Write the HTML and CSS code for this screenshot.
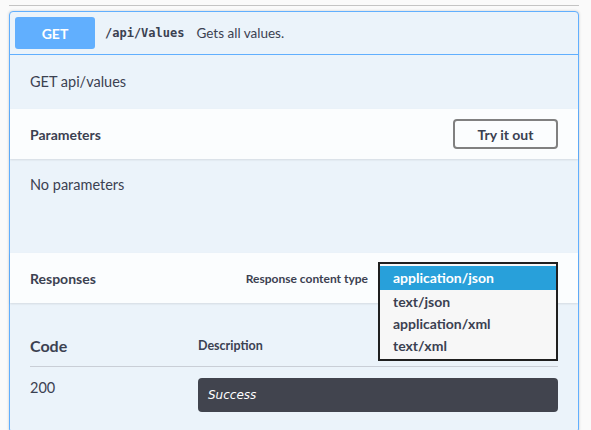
FILE: index.html
```html
<!DOCTYPE html>
<html>
<head>
<meta charset="utf-8">
<link rel="stylesheet" href="styles.css">
</head>
<body>
<div class="page">
  <div class="rule"></div>
  <div class="opblock">
    <div class="summary">
      <span class="method">GET</span>
      <span class="path">/api/Values</span>
      <span class="summary-desc">Gets all values.</span>
    </div>
    <div class="description">GET api/values</div>
    <div class="section-header">
      <h4 class="section-title">Parameters</h4>
      <button class="try-out">Try it out</button>
    </div>
    <div class="params-body">No parameters</div>
    <div class="section-header">
      <h4 class="section-title">Responses</h4>
      <div class="content-type">
        <span class="ct-label">Response content type</span>
        <div class="select">
          <ul class="listbox">
            <li class="option selected">application/json</li>
            <li class="option">text/json</li>
            <li class="option">application/xml</li>
            <li class="option">text/xml</li>
          </ul>
        </div>
      </div>
    </div>
    <div class="responses-body">
      <div class="resp-head">
        <div class="col-code head-code">Code</div>
        <div class="head-desc">Description</div>
      </div>
      <div class="resp-row">
        <div class="col-code row-code">200</div>
        <div class="resp-desc"><em>Success</em></div>
      </div>
    </div>
  </div>
</div>
</body>
</html>
```
FILE: styles.css
```css
* { box-sizing: border-box; }
html, body { margin: 0; padding: 0; }
body {
  background: #fafafa;
  font-family: Lato, "Open Sans", sans-serif;
  color: #3b4151;
  overflow: hidden;
}
.page { padding: 5px 0 0 9px; width: 579px; }
.rule { height: 1px; background: #c4c4c4; width: 570px; }
.opblock {
  margin-top: 5px;
  width: 570px;
  border: 1px solid #61affe;
  border-radius: 4px;
  background: #ebf3fa;
  box-shadow: 0 0 3px rgba(0,0,0,.19);
}
.summary {
  display: flex;
  align-items: center;
  padding: 5px;
  border-bottom: 1px solid #61affe;
}
.method {
  width: 80px;
  height: 32px;
  background: #61affe;
  color: #fff;
  border-radius: 3px;
  font-weight: 700;
  font-size: 14px;
  display: flex;
  align-items: center;
  justify-content: center;
}
.path {
  margin-left: 10px;
  font-family: "DejaVu Sans Mono", monospace;
  font-size: 12px;
  font-weight: 600;
  color: #3b4151;
}
.summary-desc {
  margin-left: 12px;
  font-size: 13.5px;
}
.description {
  padding: 18px 20px 0;
  height: 54px;
  font-size: 14.5px;
  line-height: 18px;
}
.section-header {
  height: 50px;
  display: flex;
  align-items: center;
  justify-content: space-between;
  padding: 0 20px;
  background: rgba(255,255,255,.8);
  box-shadow: 0 1px 2px rgba(0,0,0,.1);
  position: relative;
  z-index: 1;
}
.section-title {
  margin: 0;
  font-size: 14px;
  font-weight: 700;
}
.try-out {
  width: 105px;
  height: 30px;
  border: 2px solid #808080;
  border-radius: 4px;
  background: transparent;
  font-family: inherit;
  font-weight: 700;
  font-size: 14px;
  color: #3b4151;
  padding: 0;
}
.params-body {
  height: 94px;
  padding: 17px 20px 0;
  font-size: 14.5px;
  line-height: 18px;
}
.content-type {
  display: flex;
  align-items: center;
  gap: 10px;
}
.ct-label {
  font-size: 12px;
  font-weight: 700;
}
.select {
  position: relative;
  width: 180px;
  height: 30px;
}
.listbox {
  position: absolute;
  top: -1px;
  left: 0;
  width: 180px;
  margin: 0;
  padding: 2px 0 2px;
  list-style: none;
  border: 2px solid #1f1f1f;
  background: #f7f7f7;
  z-index: 5;
}
.option {
  height: 22px;
  line-height: 22px;
  padding-left: 13px;
  font-size: 14px;
  font-weight: 700;
  color: #3b4151;
}
.option.selected {
  height: 24px;
  line-height: 24px;
  margin-bottom: 1px;
  background: #28a0da;
  color: #fff;
}
.responses-body {
  padding: 30px 20px 20px;
}
.resp-head {
  display: flex;
  align-items: center;
  height: 34px;
  padding-bottom: 9px;
  border-bottom: 1px solid #c9ced6;
}
.col-code { width: 168px; flex: none; }
.head-code { font-size: 16px; font-weight: 700; }
.head-desc { font-size: 12.5px; font-weight: 700; }
.resp-row {
  display: flex;
  padding-top: 11px;
}
.row-code { font-size: 14.5px; line-height: 20px; }
.resp-desc {
  flex: 1;
  height: 34px;
  background: #41444e;
  border-radius: 4px;
  padding: 0 10px;
  display: flex;
  align-items: center;
  color: #fff;
  font-family: "DejaVu Sans", sans-serif;
  font-size: 12px;
  font-weight: 400;
}
.resp-desc em { font-style: italic; }
```
